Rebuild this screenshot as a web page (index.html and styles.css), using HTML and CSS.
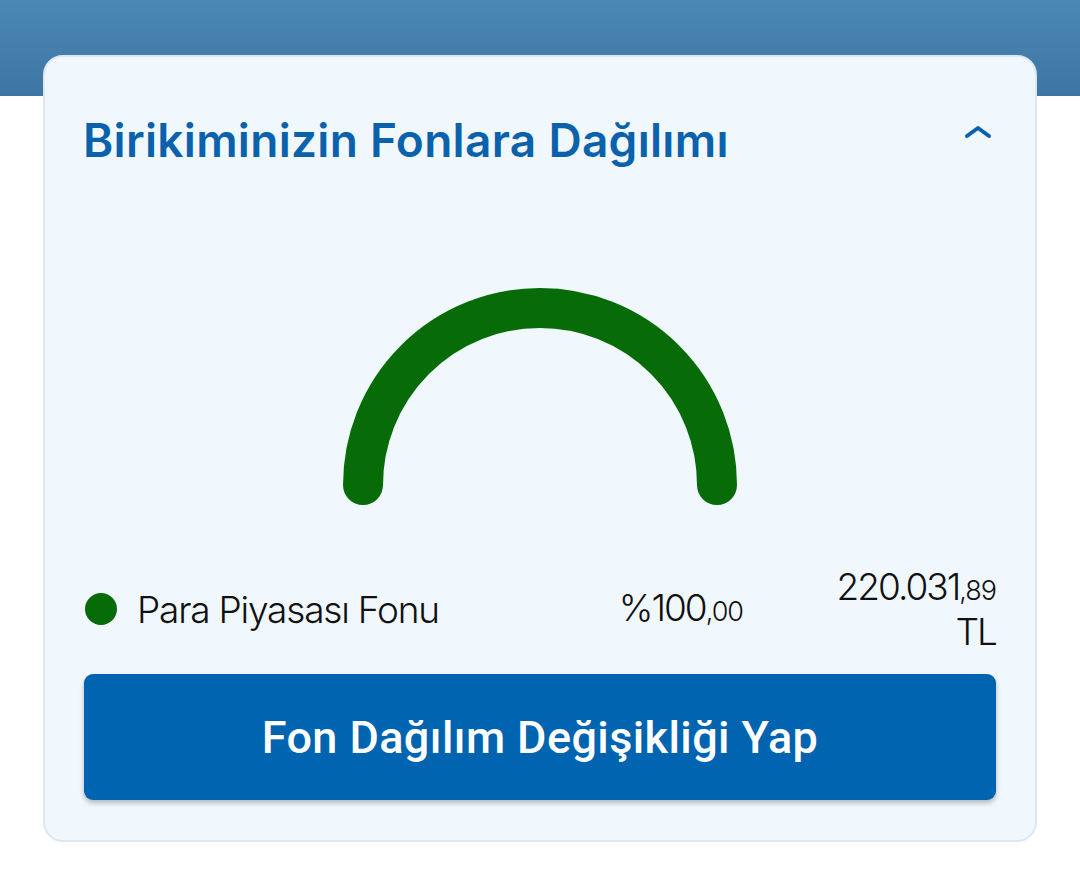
FILE: index.html
```html
<!DOCTYPE html>
<html lang="tr">
<head>
<meta charset="utf-8">
<link rel="stylesheet" href="styles.css">
</head>
<body>
<div class="topbar"></div>
<section class="card">
  <div class="card-head">
    <h2 class="title">Birikiminizin Fonlara Dağılımı</h2>
    <svg class="chevron" width="28" height="16" viewBox="0 0 28 16"><path d="M3 12 L14 4 L25 12" fill="none" stroke="#0a62ac" stroke-width="4" stroke-linecap="round" stroke-linejoin="round"/></svg>
  </div>
  <svg class="gauge" width="420" height="240" viewBox="0 0 420 240">
    <path d="M33 217 A177 177 0 0 1 387 217" fill="none" stroke="#076c07" stroke-width="40" stroke-linecap="round"/>
  </svg>
  <div class="legend-row">
    <span class="dot"></span>
    <span class="name">Para Piyasası Fonu</span>
    <span class="pct">%100<small>,00</small></span>
    <span class="amount">220.031<small>,89</small><br>TL</span>
  </div>
  <button class="action">Fon Dağılım Değişikliği Yap</button>
</section>
</body>
</html>
```
FILE: styles.css
```css
html, body { margin: 0; padding: 0; background: #ffffff; }
body { font-family: "Inter", "Noto Sans", sans-serif; }
.topbar { height: 96px; background: linear-gradient(#4b88b5, #3d76a4); }
.card {
  margin: -41px 43px 0;
  background: #f0f7fd;
  border: 2px solid #dde7ef;
  border-radius: 20px;
  padding: 0 39px 40px;
  box-sizing: border-box;
}
.card-head {
  display: flex;
  justify-content: space-between;
  align-items: center;
  padding-top: 58px;
  height: 50px;
}
.title {
  margin: 0 0 0 -1px;
  font-size: 46px;
  font-weight: 600;
  color: #0a62ac;
  line-height: 50px;
  letter-spacing: 0.3px;
  white-space: nowrap;
}
.chevron { margin-right: 4px; margin-top: -16px; }
.gauge { display: block; margin: 103px auto 0; }
.legend-row {
  display: grid;
  grid-template-columns: 32px 1fr auto 232px;
  column-gap: 21px;
  align-items: center;
  margin-top: 56px;
  height: 90px;
  font-size: 37px;
  color: #111;
  font-weight: 300;
}
.dot { width: 32px; height: 32px; border-radius: 50%; background: #076c07; margin-left: 1px; }
.name { line-height: 45px; letter-spacing: -1.2px; }
.pct { line-height: 45px; letter-spacing: -2px; }
.amount { text-align: right; line-height: 41px; letter-spacing: -2px; }
small { font-size: 27px; letter-spacing: -1px; }
.action {
  display: block;
  width: 100%;
  height: 126px;
  margin-top: 20px;
  border: none;
  border-radius: 9px;
  background: #0064b0;
  color: #fff;
  font-family: "Roboto", sans-serif;
  font-weight: 500;
  font-size: 45px;
  letter-spacing: 0.4px;
  box-shadow: 0 3px 5px rgba(0, 0, 0, 0.25);
}
```
